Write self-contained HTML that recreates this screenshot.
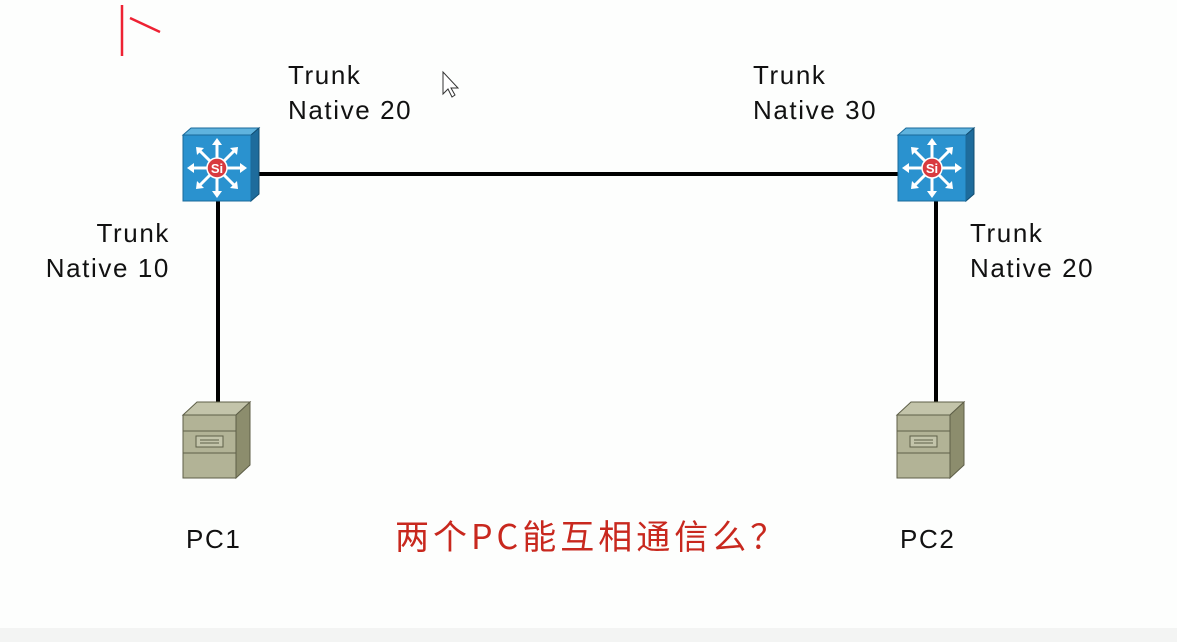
<!DOCTYPE html>
<html><head><meta charset="utf-8"><style>
body{margin:0;width:1177px;height:642px;background:#fdfefd;overflow:hidden;font-family:"Liberation Sans","Noto Sans CJK SC",sans-serif;}
.t{position:absolute;font-size:26px;letter-spacing:1.6px;line-height:35px;color:#111;white-space:nowrap;}
</style></head><body>
<svg width="1177" height="642" style="position:absolute;left:0;top:0">
<defs>
<g id="sw">
<polygon points="0,7 8,0 76,0 68,7" fill="#5fb3de" stroke="#1a6a9a"/>
<polygon points="68,7 76,0 76,66 68,73" fill="#1e6c9c" stroke="#124d70"/>
<rect x="0" y="7" width="68" height="66" fill="#2a92cf" stroke="#1a6a9a"/>
<g stroke="#fff" stroke-width="3" fill="#fff">
<line x1="34" y1="40" x2="34" y2="14"/><line x1="34" y1="40" x2="34" y2="66"/>
<line x1="34" y1="40" x2="8" y2="40"/><line x1="34" y1="40" x2="60" y2="40"/>
<line x1="34" y1="40" x2="16" y2="22"/><line x1="34" y1="40" x2="52" y2="22"/>
<line x1="34" y1="40" x2="16" y2="58"/><line x1="34" y1="40" x2="52" y2="58"/>
</g>
<g fill="#fff">
<polygon points="34,10 29,17 39,17"/><polygon points="34,70 29,63 39,63"/>
<polygon points="4,40 11,35 11,45"/><polygon points="64,40 57,35 57,45"/>
<polygon points="13,19 21,20 14,27"/><polygon points="55,19 47,20 54,27"/>
<polygon points="13,61 21,60 14,53"/><polygon points="55,61 47,60 54,53"/>
</g>
<circle cx="34" cy="40" r="10" fill="#d83a3f" stroke="#fff" stroke-width="1.5"/>
<text x="34" y="45" font-size="13" font-family="Liberation Sans" fill="#fff" text-anchor="middle" font-weight="bold">Si</text>
</g>
<g id="pc">
<polygon points="0,13 14,0 67,0 53,13" fill="#c3c4aa" stroke="#5e5f48"/>
<polygon points="53,13 67,0 67,63 53,76" fill="#8c8d6d" stroke="#5e5f48"/>
<rect x="0" y="13" width="53" height="63" fill="#b2b396" stroke="#5e5f48"/>
<line x1="0" y1="29" x2="53" y2="29" stroke="#5e5f48"/>
<line x1="0" y1="51" x2="53" y2="51" stroke="#5e5f48"/>
<rect x="13" y="34" width="27" height="11" fill="#c3c4aa" stroke="#5e5f48"/>
<line x1="17" y1="38" x2="36" y2="38" stroke="#5e5f48"/><line x1="17" y1="41" x2="36" y2="41" stroke="#5e5f48"/>
</g>
</defs>
<line x1="255" y1="174" x2="900" y2="174" stroke="#000" stroke-width="4"/>
<line x1="218" y1="200" x2="218" y2="404" stroke="#000" stroke-width="4"/>
<line x1="936" y1="200" x2="936" y2="404" stroke="#000" stroke-width="4"/>
<use href="#sw" x="183" y="128"/>
<use href="#sw" x="898" y="128"/>
<use href="#pc" x="183" y="402"/>
<use href="#pc" x="897" y="402"/>
<path d="M122 5 L122 56 M130 18 L160 32" stroke="#e23" stroke-width="2.5" fill="none"/>
<path d="M443 72 L443 94 L448 89 L452 97 L455 95 L451 88 L458 88 Z" fill="#fff" stroke="#333" stroke-width="1"/>
<rect x="0" y="628" width="1177" height="14" fill="#f3f4f3"/>
</svg>
<div class="t" style="left:288px;top:58px">Trunk<br>Native 20</div>
<div class="t" style="left:753px;top:58px">Trunk<br>Native 30</div>
<div class="t" style="left:20px;top:216px;text-align:right;width:150px">Trunk<br>Native 10</div>
<div class="t" style="left:970px;top:216px">Trunk<br>Native 20</div>
<div class="t" style="left:186px;top:522px">PC1</div>
<div class="t" style="left:900px;top:522px">PC2</div>
<div class="t" style="left:395px;top:517px;color:#c8281e;font-size:34px;letter-spacing:4px;font-family:'Noto Sans CJK SC',sans-serif">两个PC能互相通信么？</div>
</body></html>
